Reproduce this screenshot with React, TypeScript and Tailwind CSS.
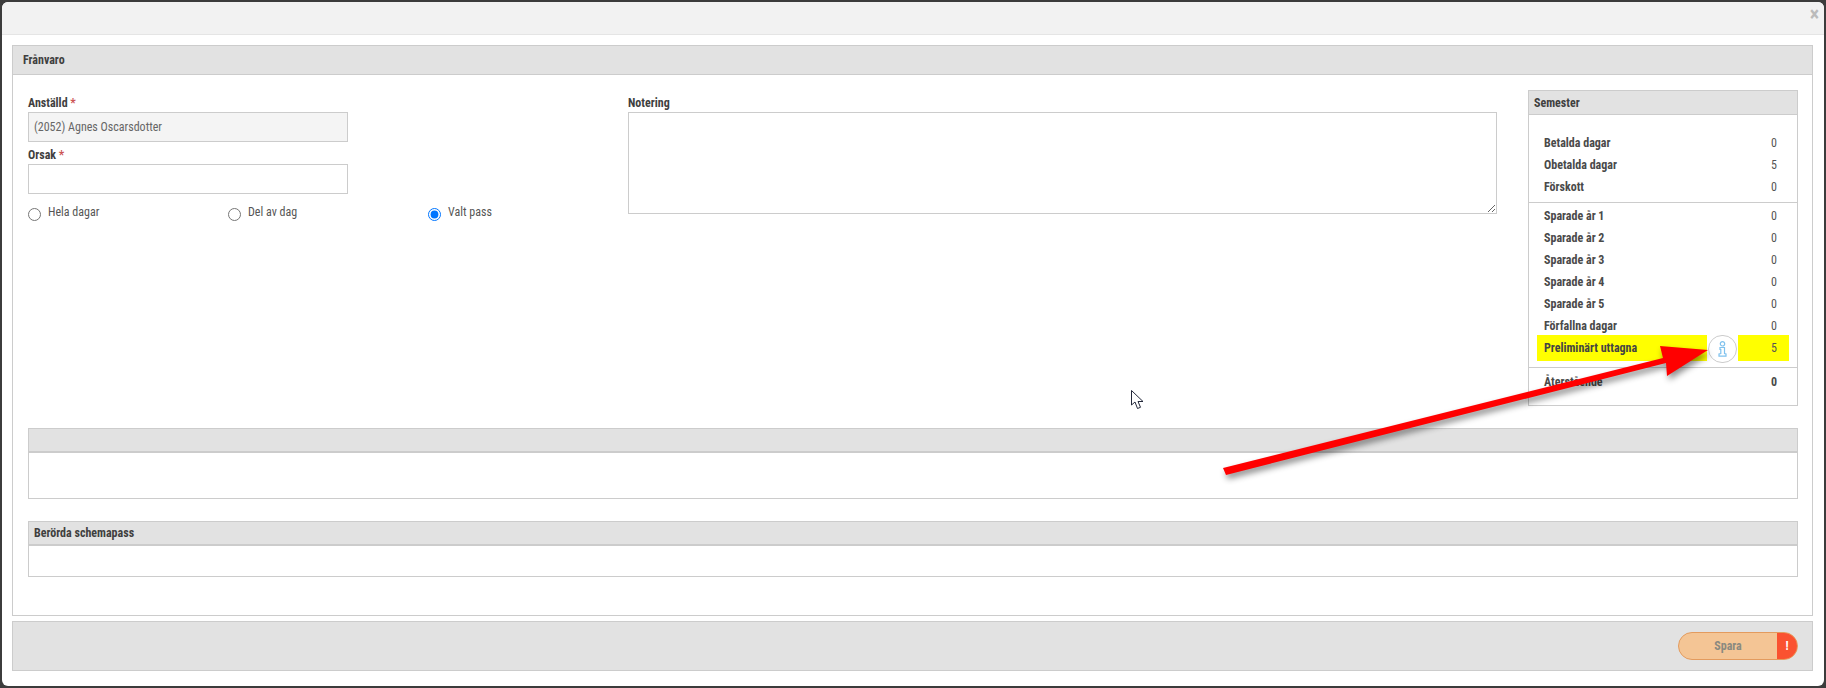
const font = "font-['Roboto',sans-serif] [font-stretch:75%]"

const Row = ({ label, value }: { label: string; value: number }) => (
  <div className="flex h-[22px] items-center justify-between pl-[15px] pr-[20px]">
    <span className="font-bold text-[#4a4a4a]">{label}</span>
    <span className="text-[#555]">{value}</span>
  </div>
)

const Section = ({ title, bodyHeight }: { title?: string; bodyHeight: string }) => (
  <section className="ml-[15px] mr-[14px] border border-[#ccc]">
    <h3 className="flex h-[24px] items-center border-b-2 border-[#ccc] bg-[#e2e2e2] pl-[5px] font-bold text-[#3f3f3f]">{title}</h3>
    <div className={bodyHeight} />
  </section>
)

const Radio = ({ label, checked }: { label: string; checked?: boolean }) => (
  <label className="flex w-[200px] items-start gap-[7px] text-[#555]">
    <input type="radio" name="typ" defaultChecked={checked} className="m-0 h-[13px] w-[13px]" />
    <span className="-mt-[4px] leading-[17px]">{label}</span>
  </label>
)

export default function App() {
  return (
    <div className={`relative h-[688px] overflow-hidden bg-[#3c3c3c] p-[2px] text-[12px] ${font}`}>
      <div className="h-[684px] w-[1822px] rounded-[6px] bg-white">
        <header className="flex h-[33px] items-start justify-end rounded-t-[6px] border-b border-[#e5e5e5] bg-[#f2f2f2] pr-[5px]">
          <span className="text-[20px] font-bold leading-[24px] text-[#bbb]">×</span>
        </header>

        <div className="ml-[10px] mr-[11px] mt-[10px] h-[571px] border border-[#ccc]">
          <h2 className="flex h-[29px] items-center border-b border-[#ccc] bg-[#e2e2e2] pl-[10px] font-bold text-[#3f3f3f]">Frånvaro</h2>

          <div className="flex h-[353px] pl-[15px] pr-[14px] pt-[15px]">
            <div className="w-[600px] pt-[4px]">
              <label className="block h-[18px] font-bold leading-[18px] text-[#3f3f3f]">
                Anställd <span className="text-[#c55]">*</span>
              </label>
              <input readOnly value="(2052) Agnes Oscarsdotter" className="block h-[30px] w-[320px] border border-[#ccc] bg-[#f4f4f4] pl-[5px] text-[#666] outline-none" />
              <label className="mt-[5px] block h-[17px] font-bold leading-[17px] text-[#3f3f3f]">
                Orsak <span className="text-[#c55]">*</span>
              </label>
              <input readOnly className="block h-[30px] w-[320px] border border-[#ccc] outline-none" />
              <div className="mt-[14px] flex">
                <Radio label="Hela dagar" />
                <Radio label="Del av dag" />
                <Radio label="Valt pass" checked />
              </div>
            </div>

            <div className="w-[869px] pt-[4px]">
              <label className="block h-[18px] font-bold leading-[19px] text-[#3f3f3f]">Notering</label>
              <textarea readOnly className="block h-[102px] w-full border border-[#ccc] outline-none" />
            </div>

            <aside className="ml-[31px] h-[316px] w-[270px] border border-[#ccc]">
              <h3 className="flex h-[24px] items-center border-b border-[#ccc] bg-[#e2e2e2] pl-[5px] font-bold text-[#3f3f3f]">Semester</h3>
              <div className="pt-[17px]">
                <Row label="Betalda dagar" value={0} />
                <Row label="Obetalda dagar" value={5} />
                <Row label="Förskott" value={0} />
                <div className="mb-[2px] mt-[4px] border-t border-[#ccc]" />
                <Row label="Sparade år 1" value={0} />
                <Row label="Sparade år 2" value={0} />
                <Row label="Sparade år 3" value={0} />
                <Row label="Sparade år 4" value={0} />
                <Row label="Sparade år 5" value={0} />
                <Row label="Förfallna dagar" value={0} />
                <div className="mx-[8px] -mt-[2px] flex h-[26px]">
                  <div className="flex flex-1 items-center bg-[#ffff00] pl-[7px] font-bold text-[#444]">Preliminärt uttagna</div>
                  <div className="flex h-[28px] w-[31px] items-center justify-center">
                    <div className="flex h-[28px] w-[29px] items-center justify-center rounded-full border border-[#ccc] bg-white">
                      <svg width="9" height="16" viewBox="0 0 9 16" fill="none" stroke="#7fc2ee" strokeWidth="1.2">
                        <circle cx="4.5" cy="2.8" r="2.2" />
                        <path d="M2 6.5h4.5v6l1.5 .5v2.2H1V13l1.8-.5V8.5H2z" />
                      </svg>
                    </div>
                  </div>
                  <div className="flex w-[51px] items-center justify-end bg-[#ffff00] pr-[12px] text-[#555]">5</div>
                </div>
                <div className="mb-[3px] mt-[6px] border-t border-[#ccc]" />
                <div className="flex h-[22px] items-center justify-between pl-[15px] pr-[20px] font-bold text-[#4a4a4a]">
                  <span>Återstående</span>
                  <span>0</span>
                </div>
              </div>
            </aside>
          </div>

          <Section bodyHeight="h-[45px]" />
          <div className="h-[22px]" />
          <Section title="Berörda schemapass" bodyHeight="h-[30px]" />
        </div>

        <footer className="ml-[10px] mr-[11px] mt-[5px] flex h-[50px] items-center justify-end border border-[#ccc] bg-[#e2e2e2] pr-[14px]">
          <button className="flex h-[28px] w-[120px] overflow-hidden rounded-full border border-[#e39b5e] bg-[#f4c595] font-bold text-[#8a8a80]">
            <span className="flex flex-1 items-center justify-center">Spara</span>
            <span className="flex w-[20px] items-center justify-center bg-[#fa5230] text-white">!</span>
          </button>
        </footer>
      </div>

      {/* annotation arrow and mouse pointer lie over the dialog */}
      <svg className="pointer-events-none absolute left-0 top-0 drop-shadow-[2px_4px_3px_rgba(0,0,0,0.45)]" width="1826" height="688">
        <polygon fill="#ff0000" points="1223,468 1663,358 1660,346 1708,350 1667,376 1666,363 1226,475" />
      </svg>
      <svg className="pointer-events-none absolute left-[1131px] top-[390px]" width="13" height="20" viewBox="0 0 13 20">
        <path d="M.5 .5V15l3.5-3 2.5 6.5 3-1.2L7 11.5h5z" fill="#fff" stroke="#23283a" strokeWidth="1" />
      </svg>
    </div>
  )
}
